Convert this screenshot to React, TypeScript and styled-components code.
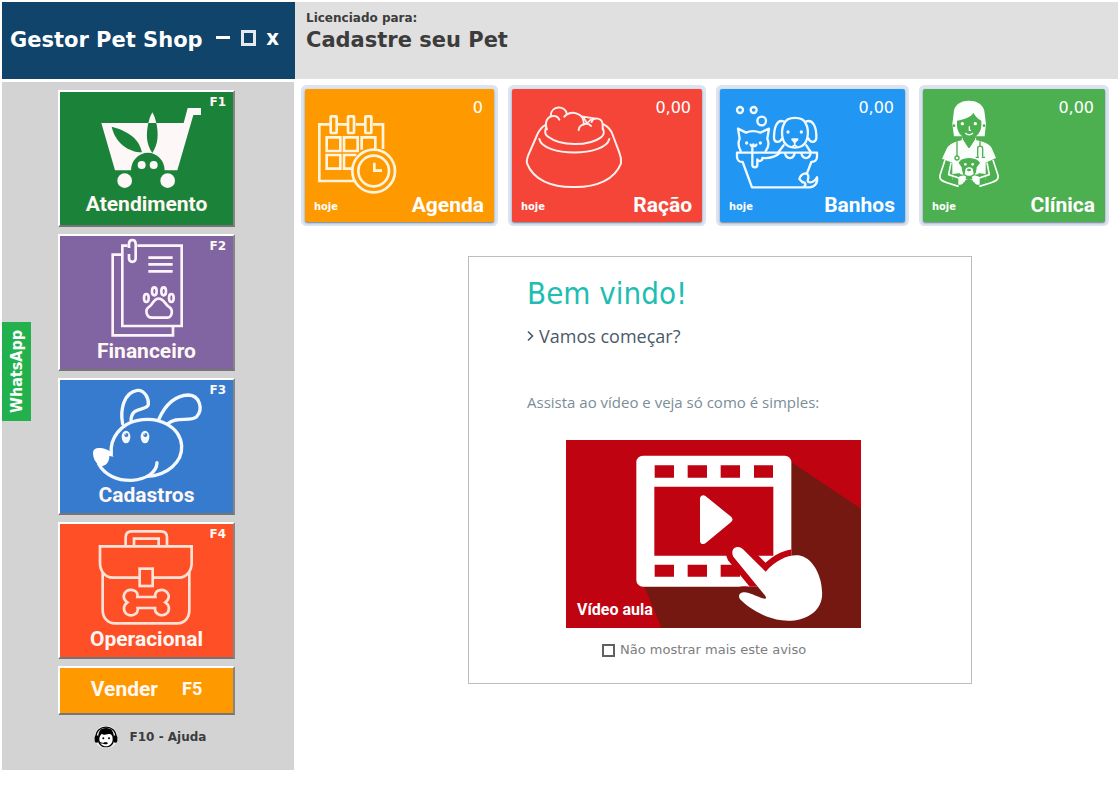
import React from "react";
import styled, { createGlobalStyle } from "styled-components";

const verdana = `"DejaVu Sans", Verdana, sans-serif`;
const tahoma = `"DejaVu Sans Condensed", Tahoma, "DejaVu Sans", sans-serif`;
const roboto = `Roboto, "Liberation Sans", sans-serif`;
const openSans = `"Open Sans", "Noto Sans", sans-serif`;

const GlobalStyle = createGlobalStyle`
  *, *::before, *::after { box-sizing: border-box; }
  body { margin: 0; background: #ffffff; font-family: ${verdana}; }
  button { margin: 0; padding: 0; border: 0; background: none; color: inherit; font: inherit; cursor: pointer; }
  h1, h2, p { margin: 0; }
  svg { display: block; }
`;

const Page = styled.div`
  display: grid;
  grid-template-columns: 292px minmax(0, 1fr);
  row-gap: 3px;
  padding: 2px;
`;

const TopBar = styled.header`
  grid-column: 1 / -1;
  display: grid;
  grid-template-columns: 293px minmax(0, 1fr);
  min-height: 77px;
`;

const Brand = styled.div`
  display: flex;
  align-items: flex-start;
  justify-content: space-between;
  padding: 24px 16px 0 8px;
  background: #10446b;
  color: #ffffff;
`;

const BrandName = styled.h1`
  font: bold 21px/28px ${verdana};
  white-space: nowrap;
`;

const WindowButtons = styled.div`
  display: flex;
  align-items: center;
  gap: 10px;
  height: 24px;
`;

const WindowButton = styled.button`
  display: flex;
  font: bold 22px/24px ${tahoma};
`;

const License = styled.div`
  padding: 8px 11px;
  background: #e0e0e0;
  color: #3c3c3c;
`;

const LicenseCaption = styled.p`
  font: bold 12px/16px ${verdana};
`;

const LicenseName = styled.p`
  font: bold 21px/28px ${verdana};
`;

const Sidebar = styled.nav`
  position: relative;
  display: flex;
  flex-direction: column;
  align-items: center;
  gap: 7px;
  min-height: 688px;
  padding: 8px 3px 20px 0;
  background: #d3d3d3;
`;

const MenuButton = styled.button<{ $color: string }>`
  position: relative;
  display: flex;
  flex-direction: column;
  width: 177px;
  height: 137px;
  border: 2px solid;
  border-color: #ffffff #858585 #757575 #ffffff;
  background: ${(p) => p.$color};
  color: #fff8f4;
`;

const MenuLabel = styled.span`
  align-self: center;
  font: bold 21px/22px ${roboto};
`;

const ShortcutKey = styled.kbd`
  position: absolute;
  top: 2px;
  right: 7px;
  font: bold 12px/16px ${verdana};
`;

const SellButton = styled(MenuButton)`
  flex-direction: row;
  align-items: center;
  justify-content: center;
  gap: 24px;
  height: 49px;
  padding-bottom: 3px;
`;

const SellKey = styled.kbd`
  font: bold 18px/22px ${roboto};
`;

const HelpButton = styled.button`
  display: flex;
  align-items: center;
  gap: 12px;
  margin-top: 3px;
  padding-left: 7px;
  color: #3c3c3c;
  font: bold 12px/24px ${verdana};
`;

const WhatsAppTab = styled.button`
  position: absolute;
  top: 240px;
  left: 0;
  width: 29px;
  height: 99px;
  background: #22b14c;
  color: #ffffff;
  font: bold 16px/29px ${tahoma};
  writing-mode: vertical-rl;
  transform: rotate(180deg);
`;

const Main = styled.main`
  padding: 3px 9px 0 7px;
`;

const Cards = styled.div`
  display: grid;
  grid-template-columns: 197fr 198fr 193fr 190fr;
  gap: 10px;
`;

const Card = styled.button<{ $color: string }>`
  display: grid;
  grid-template-columns: 110px minmax(0, 1fr);
  grid-template-rows: 100px 1fr;
  height: 133px;
  margin: 4px;
  border-radius: 2px;
  background: ${(p) => p.$color};
  box-shadow: 0 1px 2px 0 #6f7f92, 0 0 0 4px #dbe4f0;
  color: #ffffff;
`;

const CardValue = styled.span`
  justify-self: end;
  padding: 9px 11px 0 0;
  font: 16px/20px ${verdana};
`;

const CardFooter = styled.span`
  grid-column: 1 / -1;
  display: flex;
  justify-content: space-between;
  align-items: flex-end;
  padding: 0 10px 6px 9px;
`;

const CardPeriod = styled.span`
  font: bold 11px/18px ${tahoma};
`;

const CardName = styled.span`
  font: bold 21px/22px ${roboto};
`;

const Stage = styled.div`
  display: flex;
  justify-content: center;
  padding: 30px 0 0 30px;
`;

const Welcome = styled.section`
  width: 504px;
  padding: 16px 58px 23px;
  border: 1px solid #bdbdbd;
`;

const WelcomeTitle = styled.h2`
  color: #20bdb3;
  font: 31px/40px ${tahoma};
`;

const StartLink = styled.a`
  display: flex;
  align-items: center;
  gap: 5px;
  margin-top: 11px;
  color: #4a5a68;
  font: 18px/24px ${openSans};
  text-decoration: none;
`;

const Hint = styled.p`
  margin-top: 44px;
  color: #7b8d97;
  font: 15px/20px ${openSans};
`;

const VideoButton = styled.button`
  position: relative;
  display: block;
  width: 295px;
  margin: 28px 0 0 39px;
`;

const VideoCaption = styled.span`
  position: absolute;
  left: 11px;
  bottom: 8px;
  color: #ffffff;
  font: bold 16px/20px ${roboto};
`;

const DismissLabel = styled.label`
  display: flex;
  align-items: center;
  gap: 5px;
  margin: 12px 0 0 75px;
  color: #7d7d7d;
  font: 13px/20px ${verdana};
`;

const Checkbox = styled.input`
  appearance: none;
  width: 13px;
  height: 13px;
  margin: 0;
  border: 2px solid #606060;
  background: #ffffff;
  &:checked { background: #606060; }
`;

const CartIcon = () => (
  <svg width="173" height="101" viewBox="30 24 519 303" fill="#fdf8f7" aria-hidden="true">
    <path d="M154 117H401L413 72H453V93H430L382 259H344A50 52 0 0 0 243 259H195Z" />
    <path fill="#1b8339" d="M185 128C225 138 268 160 276 205C235 205 195 175 185 128ZM295 117H319C326 150 325 180 307 207C288 180 288 150 295 117Z" />
    <path d="M307 85Q316 100 319 117H295Q298 100 307 85Z" />
    <circle cx="275" cy="243" r="12" />
    <circle cx="311" cy="243" r="12" />
    <circle cx="224" cy="290" r="22" />
    <circle cx="353" cy="290" r="22" />
  </svg>
);

const PapersIcon = () => (
  <svg width="173" height="104" viewBox="30 18 519 312" fill="none" stroke="#fdf3fb" strokeWidth="8" aria-hidden="true">
    <path d="M233 47H217V288H395V47H262" />
    <path d="M213 74H188V316H369V291M295 83H368M295 103H368M295 124H368" />
    <path d="M237 54V42C237 26 257 26 257 42V85C257 99 237 99 237 85V72" />
    <path d="M326 206C310 206 308 224 298 230C282 240 290 263 306 263H350C366 263 372 240 356 230C344 222 342 206 326 206Z" />
    <ellipse cx="313" cy="184" rx="7" ry="12" />
    <ellipse cx="341" cy="184" rx="7" ry="12" />
    <ellipse cx="289" cy="204" rx="7" ry="12" />
    <ellipse cx="364" cy="204" rx="7" ry="12" />
  </svg>
);

const DogIcon = () => (
  <svg width="173" height="104" viewBox="30 18 519 312" fill="none" stroke="#f4f9ff" strokeWidth="10" strokeLinecap="round" aria-hidden="true">
    <path d="M184 240C178 190 215 150 260 140C330 125 390 160 395 215C398 265 350 305 292 307" />
    <path d="M146 270C165 305 205 320 245 319C290 316 320 295 321 266" />
    <path d="M218 150C210 110 220 55 262 49C285 47 297 75 295 92C290 112 245 95 243 138" />
    <path d="M326 137C340 105 365 65 415 63C450 65 460 105 440 128C420 145 380 125 352 150" />
    <path fill="#fff" stroke="none" d="M129 238C129 224 140 221 152 222C165 224 176 228 182 234L191 248L178 246C178 264 168 277 150 277C136 266 129 252 129 238Z" />
    <g fill="#f4f9ff" stroke="none">
      <ellipse cx="228" cy="189" rx="13" ry="19" />
      <ellipse cx="285" cy="189" rx="13" ry="19" />
    </g>
    <g fill="#377bcf" stroke="none">
      <circle cx="229" cy="183" r="6" />
      <circle cx="286" cy="183" r="6" />
    </g>
    <g fill="#f4f9ff" stroke="none">
      <circle cx="227" cy="180" r="2" />
      <circle cx="284" cy="180" r="2" />
    </g>
  </svg>
);

const BagIcon = () => (
  <svg width="173" height="104" viewBox="30 18 519 312" fill="none" stroke="#ffe2d6" strokeWidth="8" aria-hidden="true">
    <path d="M267 179H188C166 179 150 160 150 135V85H425V135C425 160 408 179 388 179H310" />
    <path d="M158 163V275C158 298 172 316 195 316H383C405 316 418 298 418 275V163" />
    <path d="M227 82V58C227 46 234 40 245 40H333C345 40 351 47 351 58V82M252 82V62H326V82" />
    <rect x="269" y="152" width="39" height="52" />
    <path d="M262 237H316C312 218 335 210 348 220C362 232 356 246 346 253C360 262 360 280 348 288C335 296 314 290 315 270H263C266 290 243 297 230 288C218 278 220 262 232 253C218 245 218 228 230 219C245 211 266 218 262 237Z" />
  </svg>
);

const SupportIcon = () => (
  <svg width="24" height="24" viewBox="0 0 72 72" aria-hidden="true">
    <circle cx="36" cy="36" r="34" fill="#f4f4f4" />
    <path d="M6 38C4 -4 68 -4 66 38" fill="none" stroke="#000" strokeWidth="4" />
    <rect x="2" y="31" width="12" height="22" rx="6" />
    <rect x="58" y="31" width="12" height="22" rx="6" />
    <path d="M12 44C12 20 18 9 36 9S60 20 60 44C60 58 50 67 36 67S12 58 12 44Z" />
    <path fill="#fff" d="M16 42C16 34 19 32 23 26C31 33 45 25 50 28C55 31 56 36 56 43C56 56 47 64 36 64S16 56 16 42Z" />
    <circle cx="28" cy="40" r="3" />
    <circle cx="45" cy="40" r="3" />
    <path d="M13 48C18 54 23 55 31 55H38" fill="none" stroke="#000" strokeWidth="3" />
    <rect x="29" y="52" width="12" height="6" rx="3" />
  </svg>
);

const CalendarIcon = () => (
  <svg width="110" height="100" viewBox="21 28 330 300" overflow="visible" fill="none" stroke="#fff4de" strokeWidth="8" aria-hidden="true">
    <path d="M95 134H64V304H172M120 134H147M173 134H200M225 134H255V208" />
    <rect x="98" y="110" width="18" height="50" rx="2" />
    <rect x="150" y="110" width="18" height="50" rx="2" />
    <rect x="202" y="110" width="18" height="50" rx="2" />
    <path d="M86 173H127V214H86ZM138 173H179V214H138ZM191 210V173H232V207M86 226H127V267H86ZM175 226H138V267H160" />
    <circle cx="227" cy="274" r="64" />
    <circle cx="227" cy="274" r="46" />
    <path d="M229 249V273H252" />
  </svg>
);

const BowlIcon = () => (
  <svg width="110" height="100" viewBox="21 27 330 300" overflow="visible" fill="none" stroke="#fff0ee" strokeWidth="6" strokeLinecap="round" aria-hidden="true">
    <path d="M123 134C108 142 100 155 95 168L70 225C66 236 64 243 66 250C85 300 140 322 207 321C275 322 330 298 348 250C349 238 346 225 343 218L322 162C317 148 307 139 296 133" />
    <path d="M123 143C117 160 122 166 132 172C165 198 250 200 288 172C296 166 298 156 294 147" />
    <path d="M103 177C115 231 300 231 313 177" />
    <path d="M137 108C137 76 182 74 186 103M126 148C118 128 126 108 146 108C154 108 160 112 163 119M178 110C192 89 240 97 236 134M221 150C223 131 250 126 258 138M260 126C262 110 293 112 293 135V147" />
    <path d="M230 109L268 115M236 112L246 130L260 116" strokeWidth="5" />
  </svg>
);

const BathIcon = () => (
  <svg width="110" height="100" viewBox="24 27 330 300" overflow="visible" fill="none" stroke="#f2f9ff" strokeWidth="7" strokeLinecap="round" strokeLinejoin="round" aria-hidden="true">
    <circle cx="84" cy="90" r="9" />
    <circle cx="125" cy="90" r="9" />
    <circle cx="149" cy="123" r="13" />
    <path d="M86 213C78 198 78 186 83 176L78 146L102 158C115 152 130 152 145 158L171 146L166 176C172 190 170 202 161 213" />
    <path d="M116 194C120 202 123 198 124 193C125 198 129 202 133 194M121 196V255C121 264 136 264 136 255V238C138 246 152 244 151 234C172 236 192 230 204 218" />
    <path d="M75 218H315V230C315 240 308 245 298 246L286 277M75 218V230C75 240 82 246 92 246L120 322H268" />
    <path d="M217 130C225 108 273 108 281 130C292 150 290 185 270 198C257 204 241 204 228 198C207 185 206 150 217 130Z" />
    <path d="M215 124C195 118 186 140 186 175C188 190 205 188 210 175M283 124C303 118 314 140 313 175C310 190 294 188 289 175" />
    <path d="M215 196L198 218M283 196L296 216M219 220C223 239 243 239 248 220M268 220C272 239 292 239 296 220" />
    <path fill="#f2f9ff" d="M241 178H256L248 186Z" />
    <path d="M248 188V195M241 200C245 195 251 195 255 200" strokeWidth="5" />
    <path d="M262 297C268 278 287 276 289 288C290 298 285 300 288 305C297 310 308 304 315 292C318 312 306 322 292 322H272C286 316 280 306 272 307L262 297Z" />
    <g fill="#f2f9ff" stroke="none">
      <circle cx="104" cy="189" r="5" />
      <circle cx="145" cy="189" r="5" />
      <circle cx="228" cy="156" r="5" />
      <circle cx="268" cy="156" r="5" />
    </g>
  </svg>
);

const VetIcon = () => (
  <svg width="110" height="100" viewBox="24 27 330 300" overflow="visible" fill="none" stroke="#fbfffb" strokeWidth="5" strokeLinejoin="round" aria-hidden="true">
    <g stroke="none" fill="#fbfffb">
      <path d="M116 100C116 76 135 62 162 62S208 76 209 100L213 132L209 169H117L112 132Z" />
      <path d="M145 180L162 207L179 180C205 184 224 192 230 204L243 234L212 248V300H112V248L81 236L96 204C104 192 120 184 145 180Z" />
    </g>
    <g stroke="none" fill="#4caf50">
      <path d="M126 122C148 118 170 110 175 98C182 110 190 118 199 122V136C199 158 182 176 162 176S126 158 126 136Z" />
      <path d="M147 168H177V182L162 202L147 182Z" />
      <circle cx="117" cy="137" r="4" />
      <circle cx="207" cy="137" r="4" />
    </g>
    <path d="M142 174V186L162 207L182 186V174" strokeWidth="3" />
    <path d="M163 139V151H168M151 159C157 166 168 166 174 159" strokeWidth="4" />
    <circle cx="142" cy="131" r="5" fill="#fbfffb" stroke="none" />
    <circle cx="181" cy="131" r="5" fill="#fbfffb" stroke="none" />
    <g stroke="#4caf50" strokeWidth="4">
      <path d="M126 184V228M195 184V198M182 232H192M200 232H210" />
      <circle cx="126" cy="234" r="6" />
      <path d="M188 230V206C188 196 203 196 203 206V230" />
      <path d="M108 247L101 284M217 247L225 284" />
    </g>
    <path fill="#4caf50" stroke="none" d="M131 249C136 238 144 236 162 234C180 236 189 238 195 249L185 262C184 288 176 300 162 300S141 288 140 262ZM112 282L145 278L151 318L112 304ZM212 282L181 278L175 318L212 304Z" />
    <path fill="#fbfffb" stroke="none" d="M152 266C156 260 169 260 173 266L176 281C170 289 154 289 149 281ZM139 264L134 282L145 284ZM187 264L191 282L181 284Z" />
    <ellipse cx="162" cy="270" rx="6" ry="4" fill="#4caf50" stroke="none" />
    <circle cx="151" cy="253" r="4" fill="#fbfffb" stroke="none" />
    <circle cx="173" cy="253" r="4" fill="#fbfffb" stroke="none" />
    <path d="M90 240L75 286C72 300 84 304 96 308L131 319M108 248L101 284L132 294M234 240L249 286C252 300 240 304 228 308L193 319M216 248L223 284L192 294" />
    <path fill="#fbfffb" stroke="none" d="M130 292C139 285 150 284 154 291C149 297 154 304 146 307C144 313 139 316 130 314ZM194 292C185 285 174 284 170 291C175 297 170 304 178 307C180 313 185 316 194 314Z" />
  </svg>
);

const handShape =
  "M520 380C508 356 533 342 549 358L617 425C650 388 690 371 722 377C765 388 790 450 786 500C780 552 725 578 665 571C612 564 566 534 540 508C530 490 548 483 566 489C586 495 607 507 616 506C620 504 617 499 614 495Z";

const VideoPicture = () => (
  <svg width="295" height="188" viewBox="18 30 885 564" preserveAspectRatio="none" aria-hidden="true">
    <defs>
      <clipPath id="frame"><rect x="229" y="77" width="465" height="393" rx="20" /></clipPath>
    </defs>
    <rect x="18" y="30" width="885" height="564" fill="#bf0311" />
    <path d="M688 92L903 236V594H305L251 464Z" fill="#751812" />
    <rect x="229" y="77" width="465" height="393" rx="20" fill="#fff" />
    <path fill="#bf0311" d="M284 106H342V143H284ZM383 106H441V143H383ZM482 106H540V143H482ZM582 106H639V143H582ZM284 404H342V440H284ZM383 404H441V440H383ZM482 404H540V440H482ZM283 170H640V377H283Z" />
    <path d="M430 206V332L507 268Z" fill="#fff" stroke="#fff" strokeWidth="20" strokeLinejoin="round" />
    <path d={handShape} fill="#bf0311" stroke="#bf0311" strokeWidth="38" clipPath="url(#frame)" />
    <path d={handShape} fill="#fff" />
  </svg>
);

const menu = [
  { name: "Atendimento", shortcut: "F1", color: "#1b8339", icon: <CartIcon /> },
  { name: "Financeiro", shortcut: "F2", color: "#8065a2", icon: <PapersIcon /> },
  { name: "Cadastros", shortcut: "F3", color: "#377bcf", icon: <DogIcon /> },
  { name: "Operacional", shortcut: "F4", color: "#ff4f26", icon: <BagIcon /> },
];

const cards = [
  { name: "Agenda", value: "0", color: "#ff9900", icon: <CalendarIcon /> },
  { name: "Ração", value: "0,00", color: "#f44538", icon: <BowlIcon /> },
  { name: "Banhos", value: "0,00", color: "#2196f3", icon: <BathIcon /> },
  { name: "Clínica", value: "0,00", color: "#4caf50", icon: <VetIcon /> },
];

export default function App() {
  return (
    <>
      <GlobalStyle />
      <Page>
        <TopBar>
          <Brand>
            <BrandName>Gestor Pet Shop</BrandName>
            <WindowButtons>
              <WindowButton aria-label="Minimizar">
                <svg width="15" height="16"><path d="M0 7.5H14" stroke="#fff" strokeWidth="3" /></svg>
              </WindowButton>
              <WindowButton aria-label="Maximizar">
                <svg width="15" height="16"><path d="M1.5 1.5H13.5V14.5H1.5Z" fill="none" stroke="#e4eaf0" strokeWidth="3" /></svg>
              </WindowButton>
              <WindowButton aria-label="Fechar">x</WindowButton>
            </WindowButtons>
          </Brand>
          <License>
            <LicenseCaption>Licenciado para:</LicenseCaption>
            <LicenseName>Cadastre seu Pet</LicenseName>
          </License>
        </TopBar>

        <Sidebar>
          {menu.map((item) => (
            <MenuButton key={item.name} $color={item.color}>
              {item.icon}
              <MenuLabel>{item.name}</MenuLabel>
              <ShortcutKey>{item.shortcut}</ShortcutKey>
            </MenuButton>
          ))}
          <SellButton $color="#ff9900">
            <MenuLabel>Vender</MenuLabel>
            <SellKey>F5</SellKey>
          </SellButton>
          <HelpButton>
            <SupportIcon />
            F10 - Ajuda
          </HelpButton>
          <WhatsAppTab>WhatsApp</WhatsAppTab>
        </Sidebar>

        <Main>
          <Cards>
            {cards.map((card) => (
              <Card key={card.name} $color={card.color}>
                {card.icon}
                <CardValue>{card.value}</CardValue>
                <CardFooter>
                  <CardPeriod>hoje</CardPeriod>
                  <CardName>{card.name}</CardName>
                </CardFooter>
              </Card>
            ))}
          </Cards>
          <Stage>
            <Welcome>
              <WelcomeTitle>Bem vindo!</WelcomeTitle>
              <StartLink href="#video">
                <svg width="7" height="12" viewBox="0 0 7 12" fill="none" stroke="currentColor" strokeWidth="1.6"><path d="M1 1.5L5.5 6L1 10.5" /></svg>
                Vamos começar?
              </StartLink>
              <Hint>Assista ao vídeo e veja só como é simples:</Hint>
              <VideoButton id="video">
                <VideoPicture />
                <VideoCaption>Vídeo aula</VideoCaption>
              </VideoButton>
              <DismissLabel>
                <Checkbox type="checkbox" />
                Não mostrar mais este aviso
              </DismissLabel>
            </Welcome>
          </Stage>
        </Main>
      </Page>
    </>
  );
}
